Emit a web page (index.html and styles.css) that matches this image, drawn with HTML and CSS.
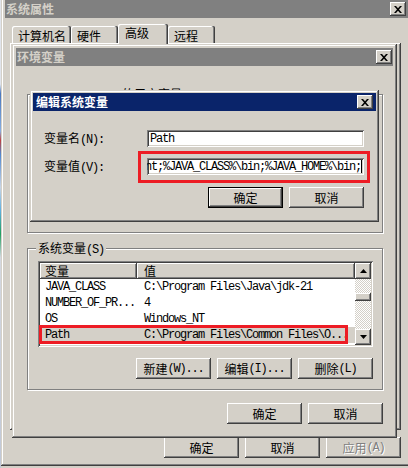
FILE: index.html
```html
<!DOCTYPE html>
<html>
<head>
<meta charset="utf-8">
<link rel="stylesheet" href="styles.css">
</head>
<body>
<div class="desk"></div>

<div class="win outer">
  <div class="title"><span>系统属性</span><span class="xbtn"><svg viewBox="0 0 8 7"><path d="M0 0h2l2 2.3L6 0h2L5 3.5 8 7H6L4 4.7 2 7H0l3-3.5z"/></svg></span></div>
  <div class="tabs">
    <div class="tab t1">计算机名</div>
    <div class="tab t2">硬件</div>
    <div class="tab t3 sel">高级</div>
    <div class="tab t4">远程</div>
  </div>
  <div class="panel"></div>
  <div class="btnrow obtns">
    <div class="btn">确定</div>
    <div class="btn">取消</div>
    <div class="btn dis">应用<span class="m">(A)</span></div>
  </div>
</div>

<div class="win env">
  <div class="title"><span>环境变量</span><span class="xbtn"><svg viewBox="0 0 8 7"><path d="M0 0h2l2 2.3L6 0h2L5 3.5 8 7H6L4 4.7 2 7H0l3-3.5z"/></svg></span></div>
  <fieldset class="grp ugrp">
    <legend><span class="m">Administrator </span>的用户变量<span class="m">(U)</span></legend>
    <div class="list ulist"></div>
    <div class="btnrow gbtns">
      <div class="btn">新建<span class="m">(N)...</span></div>
      <div class="btn">编辑<span class="m">(E)...</span></div>
      <div class="btn">删除<span class="m">(D)</span></div>
    </div>
  </fieldset>
  <fieldset class="grp sgrp">
    <legend>系统变量<span class="m">(S)</span></legend>
    <div class="list">
      <div class="cols">
        <div class="hdr"><div class="hc c1">变量</div><div class="hc c2">值</div></div>
        <div class="r"><div class="c1 m">JAVA_CLASS</div><div class="c2 m">C:\Program Files\Java\jdk-21</div></div>
        <div class="r"><div class="c1 m">NUMBER_OF_PR...</div><div class="c2 m">4</div></div>
        <div class="r"><div class="c1 m">OS</div><div class="c2 m">Windows_NT</div></div>
        <div class="r sel"><div class="c1 m">Path</div><div class="c2 m">C:\Program Files\Common Files\O...</div></div>
      </div>
      <div class="sb">
        <div class="sbtn"><svg width="7" height="4" viewBox="0 0 7 4"><path d="M3.5 0L7 4H0z"/></svg></div>
        <div class="track"><div class="thumb"></div></div>
        <div class="sbtn"><svg width="7" height="4" viewBox="0 0 7 4"><path d="M0 0h7L3.5 4z"/></svg></div>
      </div>
      <div class="mark rowmark"></div>
    </div>
    <div class="btnrow gbtns">
      <div class="btn">新建<span class="m">(W)...</span></div>
      <div class="btn">编辑<span class="m">(I)...</span></div>
      <div class="btn">删除<span class="m">(L)</span></div>
    </div>
  </fieldset>
  <div class="btnrow ebtns">
    <div class="btn">确定</div>
    <div class="btn">取消</div>
  </div>
</div>

<div class="win dlg">
  <div class="title"><span>编辑系统变量</span><span class="xbtn"><svg viewBox="0 0 8 7"><path d="M0 0h2l2 2.3L6 0h2L5 3.5 8 7H6L4 4.7 2 7H0l3-3.5z"/></svg></span></div>
  <div class="dbody">
    <div class="frow">
      <div class="lbl">变量名<span class="m">(N):</span></div>
      <div class="fwrap"><div class="field"><span class="m">Path</span></div></div>
    </div>
    <div class="frow r2">
      <div class="lbl">变量值<span class="m">(V):</span></div>
      <div class="fwrap">
        <div class="field val"><span class="m">nt;%JAVA_CLASS%\bin;%JAVA_HOME%\bin;</span><i class="caret"></i></div>
        <div class="mark fmark"></div>
      </div>
    </div>
    <div class="btnrow dbtns">
      <div class="btn def">确定</div>
      <div class="btn">取消</div>
    </div>
  </div>
</div>
</body>
</html>
```

FILE: styles.css
```css
* { box-sizing: border-box; margin: 0; padding: 0; }
html, body { width: 408px; height: 468px; overflow: hidden; }
body {
  position: relative;
  background: #d4d0c8;
  color: #000;
  font-family: "Noto Sans CJK SC", "Noto Sans CJK JP", sans-serif;
  font-size: 12px;
  line-height: 12px;
}
.m { font-family: "Liberation Mono", monospace; font-size: 12px; letter-spacing: -1.2px; }

.desk {
  position: absolute; left: 0; top: 0; width: 1px; height: 468px;
  background: linear-gradient(#e0e4ec 0, #e0e4ec 18%, #4a78c0 20%, #88aee0 28%, #c04040 30%, #5088d0 33%, #c8d4e4 40%, #60b0e0 45%, #20a060 50%, #d4d8e0 55%, #c0c8d8 100%);
}

.win {
  position: absolute;
  background: #d4d0c8;
  padding: 4px;
  box-shadow: inset -1px -1px #404040, inset 1px 1px #d4d0c8, inset -2px -2px #808080, inset 2px 2px #fff;
}
.outer { left: 1px; top: -4px; width: 412px; height: 470px; }
.env { left: 12px; top: 44px; width: 385px; height: 394px; }
.dlg { left: 30px; top: 90px; width: 349px; height: 132px; padding: 3px; }

.title {
  display: flex; align-items: center; justify-content: space-between;
  height: 18px; padding: 0 3px 0 1px;
  background: #808080; color: #d4d0c8; font-weight: bold;
}
.env .title { padding-right: 1px; }
.dlg .title { padding-left: 3px; background: #0a246a; color: #fff; }
.xbtn {
  display: flex; align-items: center; justify-content: center;
  width: 16px; height: 14px; background: #d4d0c8;
  box-shadow: inset -1px -1px #404040, inset 1px 1px #fff, inset -2px -2px #808080;
}
.xbtn svg { display: block; width: 8px; height: 7px; fill: #000; }

.tabs { display: flex; align-items: flex-end; height: 19px; margin: 6px 0 0 7px; }
.tab {
  display: flex; align-items: center;
  height: 17px; padding: 2px 0 0 6px;
  background: #d4d0c8; border-radius: 2px 2px 0 0;
  box-shadow: inset -1px 0 #404040, inset -2px 0 #808080, inset 1px 1px #fff;
}
.t1 { width: 59px; }
.t2 { width: 47px; }
.t3 { width: 50px; }
.t4 { width: 47px; }
.tab.sel { position: relative; z-index: 1; height: 20px; margin-bottom: -1px; padding: 0 0 2px 7px; }
.panel {
  width: 391px; height: 387px; margin-left: 5px;
  box-shadow: inset -1px -1px #404040, inset 1px 1px #fff, inset -2px -2px #808080;
}

.btnrow { display: flex; justify-content: flex-end; gap: 6px; }
.btn {
  display: flex; align-items: center; justify-content: center;
  width: 75px; height: 21px; background: #d4d0c8; white-space: nowrap;
  box-shadow: inset -1px -1px #404040, inset 1px 1px #fff, inset -2px -2px #808080;
}
.btn.def { box-shadow: inset 0 0 0 1px #000, inset -2px -2px #404040, inset 2px 2px #fff, inset -3px -3px #808080; }
.btn.dis { color: #808080; text-shadow: 1px 1px #fff; }
.obtns { margin-top: 7px; padding-right: 8px; }

.grp {
  min-width: 0; width: 356px; margin-left: 11px;
  border: 1px solid #808080;
  box-shadow: inset 1px 1px #fff, 1px 1px #fff;
  padding: 0 9px 10px 10px;
}
.grp legend { height: 12px; margin-left: -2px; padding: 0 2px; line-height: 12px; background: #d4d0c8; white-space: nowrap; }
.ugrp { margin-top: 22px; }
.sgrp { margin-top: 9px; }
.list {
  position: relative; display: flex;
  height: 86px; margin-top: 7px; padding: 2px; background: #fff;
  box-shadow: inset 1px 1px #808080, inset -1px -1px #fff, inset 2px 2px #404040, inset -2px -2px #d4d0c8;
}
.ulist { height: 83px; }
.gbtns { margin-top: 11px; }
.ebtns { margin-top: 13px; padding-right: 10px; }

.cols { width: 315px; overflow: hidden; }
.hdr { display: flex; height: 16px; }
.hc {
  display: flex; align-items: center; height: 16px; background: #d4d0c8;
  box-shadow: inset -1px -1px #404040, inset 1px 1px #fff, inset -2px -2px #808080;
}
.c1 { width: 97px; padding-left: 5px; flex-shrink: 0; }
.c2 { width: 218px; padding-left: 7px; flex-shrink: 0; }
.r { display: flex; align-items: center; height: 16px; white-space: nowrap; }
.r.sel { background: #d4d0c8; }

.sb { display: flex; flex-direction: column; width: 16px; }
.sbtn {
  display: flex; align-items: center; justify-content: center;
  height: 16px; background: #d4d0c8;
  box-shadow: inset -1px -1px #404040, inset 1px 1px #fff, inset -2px -2px #808080;
}
.sbtn svg { display: block; fill: #000; }
.track { flex: 1; background: repeating-conic-gradient(#fff 0 25%, #d4d0c8 0 50%) 0 0 / 2px 2px; }
.thumb {
  height: 8px; margin-top: 14px; background: #d4d0c8;
  box-shadow: inset -1px -1px #404040, inset 1px 1px #fff, inset -2px -2px #808080;
}

.mark { position: absolute; border: 3px solid #ed1c24; }
.rowmark { left: 1px; top: 64px; width: 309px; height: 19px; }

.dbody { padding: 19px 12px 0 11px; }
.frow { display: flex; align-items: center; height: 17px; }
.r2 { margin-top: 11px; }
.lbl { width: 103px; flex-shrink: 0; white-space: nowrap; }
.fwrap { position: relative; width: 217px; height: 17px; }
.field {
  display: flex; align-items: center;
  height: 17px; padding: 0 3px; overflow: hidden; white-space: nowrap; background: #fff;
  box-shadow: inset 1px 1px #808080, inset -1px -1px #fff, inset 2px 2px #404040, inset -2px -2px #d4d0c8;
}
.field span { flex-shrink: 0; }
.field.val { justify-content: flex-end; padding: 0 2px; }
.caret { display: block; flex-shrink: 0; width: 1px; height: 13px; background: #000; }
.fmark { left: -9px; top: -7px; width: 232px; height: 32px; }
.dbtns { margin-top: 12px; }
```
